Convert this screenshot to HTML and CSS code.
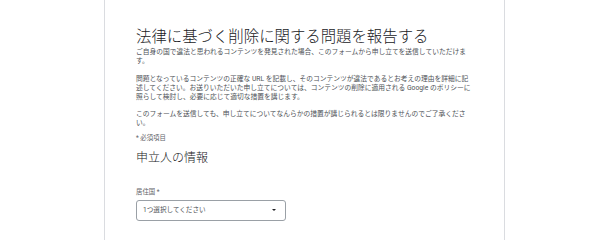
FILE: index.html
```html
<!DOCTYPE html>
<html lang="ja">
<head>
<meta charset="utf-8">
<title>法律に基づく削除に関する問題を報告する</title>
<link rel="stylesheet" href="styles.css">
</head>
<body>
<main class="card">
  <h1 class="title">法律に基づく削除に関する問題を報告する</h1>
  <p class="text first">ご自身の国で違法と思われるコンテンツを発見された場合、このフォームから申し立てを送信していただけます。</p>
  <p class="text">問題となっているコンテンツの正確な URL を記載し、そのコンテンツが違法であるとお考えの理由を詳細に記述してください。お送りいただいた申し立てについては、コンテンツの削除に適用される Google のポリシーに照らして検討し、必要に応じて適切な措置を講じます。</p>
  <p class="text last">このフォームを送信しても、申し立てについてなんらかの措置が講じられるとは限りませんのでご了承ください。</p>
  <p class="required">* 必須項目</p>
  <h2 class="section">申立人の情報</h2>
  <div class="field">
    <label class="label">居住国 *</label>
    <div class="select">
      <span class="select-text">1つ選択してください</span>
      <span class="arrow"></span>
    </div>
  </div>
</main>
</body>
</html>
```
FILE: styles.css
```css
html, body {
  margin: 0;
  padding: 0;
  height: 100%;
  background: #ffffff;
}
body {
  font-family: Roboto, "Noto Sans CJK JP", sans-serif;
  color: #3c4043;
  overflow: hidden;
}
.card {
  box-sizing: border-box;
  height: 100%;
  margin-left: 104px;
  width: 401px;
  padding: 27px 32px 0 31px;
  border-left: 1px solid #dadce0;
  border-right: 1px solid #dadce0;
  background: #ffffff;
  display: flex;
  flex-direction: column;
  overflow: hidden;
}
.title {
  margin: 0;
  font-size: 15.4px;
  line-height: 20px;
  font-weight: 300;
  color: #202124;
  white-space: nowrap;
}
.text {
  margin: 9.5px 0 0 0;
  font-size: 6.76px;
  line-height: 8.8px;
  color: #4d5156;
}
.text.first {
  margin-top: 1px;
}
.text.last {
  margin-top: 8.5px;
}
.required {
  margin: 6px 0 0 0;
  font-size: 6.4px;
  line-height: 8.4px;
  color: #5f6368;
}
.section {
  margin: 8px 0 0 0;
  font-size: 12px;
  line-height: 16px;
  font-weight: 300;
  color: #202124;
}
.field {
  margin-top: 21.8px;
  display: flex;
  flex-direction: column;
  gap: 3.8px;
}
.label {
  font-size: 6.4px;
  line-height: 8.4px;
  color: #5f6368;
}
.select {
  width: 150px;
  height: 21px;
  flex-shrink: 0;
  box-sizing: border-box;
  border: 1px solid #9aa0a6;
  border-radius: 3px;
  display: flex;
  align-items: center;
  justify-content: space-between;
  padding: 0 9px 0 6px;
}
.select-text {
  font-size: 6.6px;
  line-height: 8px;
  color: #4d5156;
}
.arrow {
  width: 0;
  height: 0;
  border-left: 2.5px solid transparent;
  border-right: 2.5px solid transparent;
  border-top: 2.5px solid #202124;
}
```
